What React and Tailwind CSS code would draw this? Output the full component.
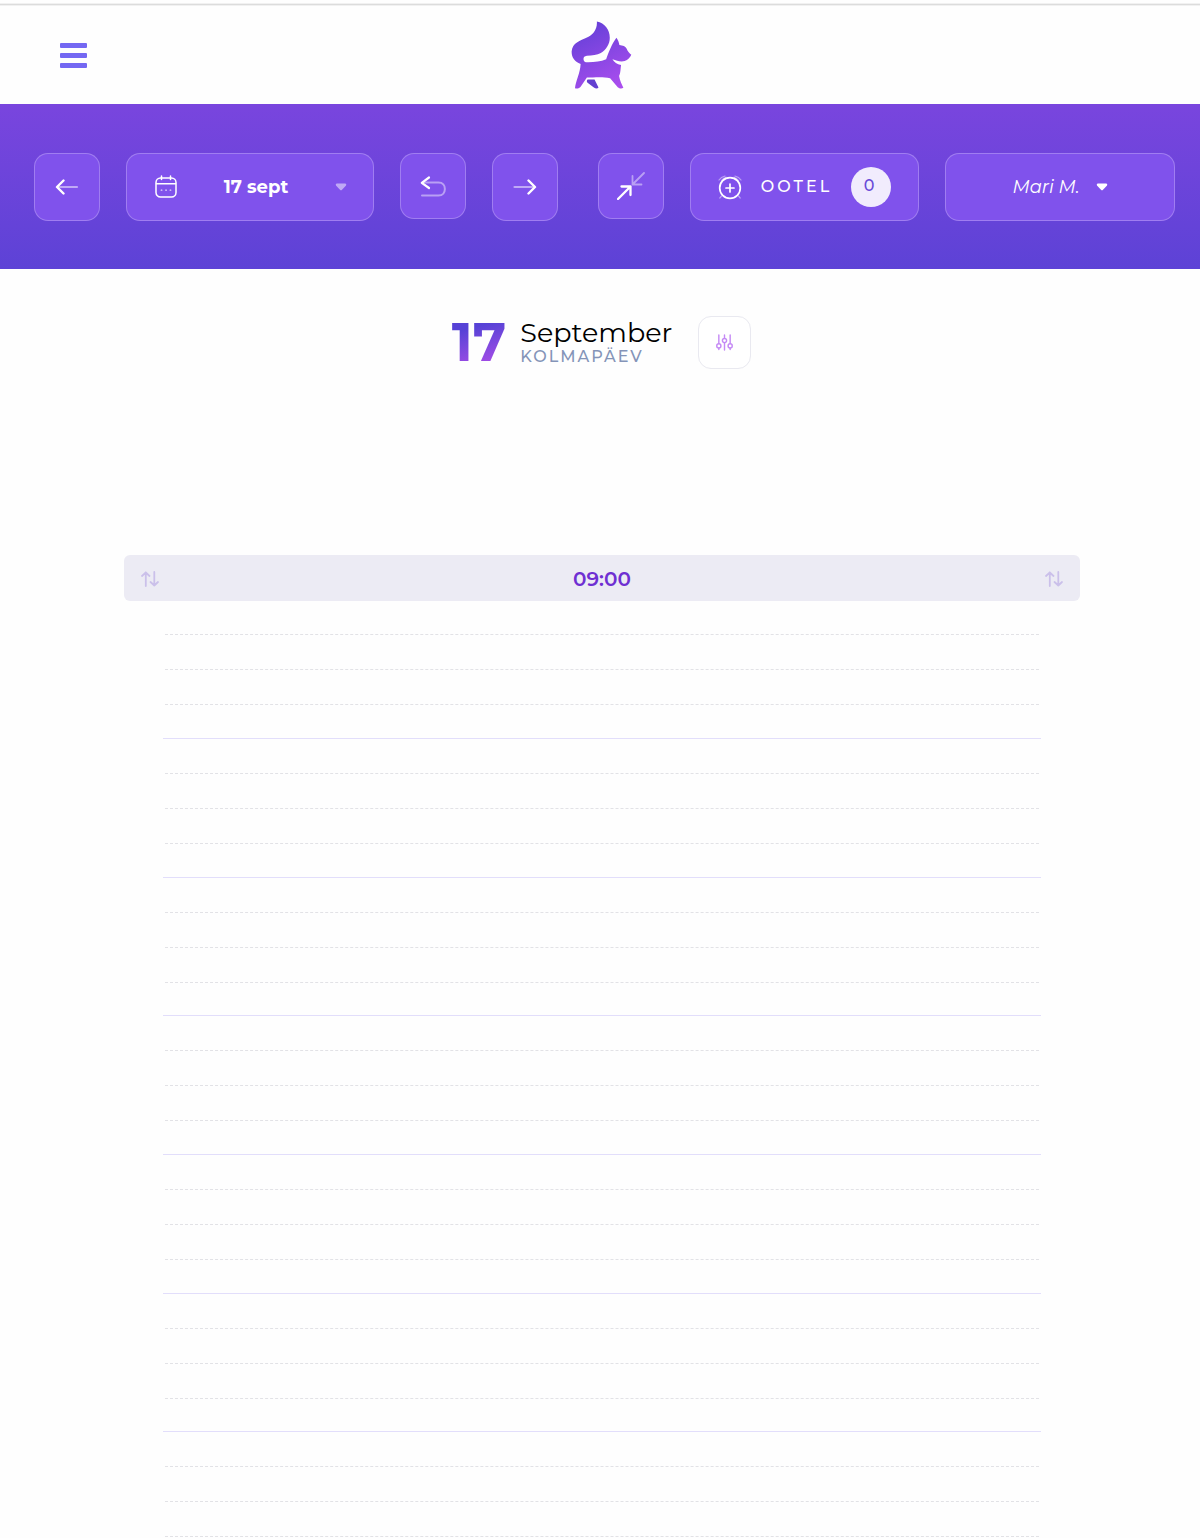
import { useState } from "react";

const HOURS = ["09:00", "10:00", "11:00", "12:00", "13:00", "14:00", "15:00"];
const STAFF = ["Mari M."];

function ToolButton({ label, className = "", children, ...props }) {
  return (
    <button
      type="button"
      aria-label={label}
      className={`flex w-[66px] shrink-0 items-center justify-center rounded-[14px] border border-white/25 bg-[#8052ec] ${className}`}
      {...props}
    >
      {children}
    </button>
  );
}

function Logo() {
  return (
    <svg viewBox="64 64 184 204" className="h-[68px] w-[61px]" aria-hidden="true">
      <defs>
        <linearGradient id="logo" x1="0.3" y1="0" x2="0.75" y2="1">
          <stop offset="0" stopColor="#6540d8" />
          <stop offset="1" stopColor="#ab4eee" />
        </linearGradient>
      </defs>
      <path
        fill="url(#logo)"
        d="M142 65C166 70 181 90 181 114C181 134 170 150 154 160C143 167 128 167 112 168C103 169 101 174 102 180C103 186 108 189 116 188C136 187 154 186 170 179C177 160 187 132 201 114C206 120 209 129 210 136C220 137 229 140 232 147C235 156 241 161 246 165C242 173 236 181 226 184C214 188 202 183 189 179C194 188 203 194 215 196C213 208 214 219 209 229C211 243 218 255 222 265C216 269 210 267 205 263L182 236C160 231 132 234 112 234L93 262C89 267 82 269 76 266C78 245 92 220 93 193C75 188 65 172 66 155C67 142 73 133 82 128C102 115 121 113 133 97C140 87 143 76 142 65Z"
      />
      <path
        fill="#6340d0"
        d="M114 240H135L147 264C144 269 138 268 133 264L114 250C111 247 111 243 114 240Z"
      />
    </svg>
  );
}

function Caret({ className = "" }) {
  return (
    <svg viewBox="0 0 12 8" className={`h-2 w-3 fill-white ${className}`} aria-hidden="true">
      <path d="M2 0.5H10Q12 1 10.8 2.8L7 6.7Q6 7.7 5 6.7L1.2 2.8Q0 1 2 0.5Z" />
    </svg>
  );
}

function SortIcon() {
  return (
    <svg
      viewBox="0 0 18 16"
      className="h-4 w-[18px] fill-none stroke-[#cbc0ea] stroke-[1.8]"
      strokeLinecap="round"
      strokeLinejoin="round"
      aria-hidden="true"
    >
      <path d="M4.8 15V1.5M1 5L4.8 1.5L8.5 5M13.3 1V14.5M9.5 11L13.3 14.5L17 11" />
    </svg>
  );
}

export default function App() {
  const [waiting] = useState(0);
  const [staff, setStaff] = useState(STAFF[0]);

  return (
    <div className="flex h-screen flex-col overflow-hidden bg-[#fefefe] pt-[3px] font-['Montserrat','Inter',sans-serif]">
      <div className="h-[3px] shrink-0 border-y border-[#f1f1f1] bg-[#dcdcdc]" />

      {/* Header */}
      <header className="grid h-[98px] shrink-0 grid-cols-3 items-center px-[60px]">
        <button type="button" aria-label="Menüü" className="flex w-[27px] flex-col gap-[5px]">
          <span className="h-[5px] rounded-[1px] bg-[#7468f2]" />
          <span className="h-[5px] rounded-[1px] bg-[#7468f2]" />
          <span className="h-[5px] rounded-[1px] bg-[#7468f2]" />
        </button>
        <a href="#" aria-label="Avaleht" className="ml-[3px] justify-self-center">
          <Logo />
        </a>
      </header>

      {/* Toolbar */}
      <nav className="flex h-[165px] shrink-0 items-start gap-[26px] bg-linear-to-b from-[#7945de] to-[#5d42d6] pt-[49px] pr-[25px] pl-[34px] text-white">
        <ToolButton label="Eelmine päev" className="h-[68px]">
          <svg viewBox="0 0 24 16" className="h-4 w-6 fill-none stroke-white" strokeLinecap="round" strokeLinejoin="round">
            <path d="M4 8H22" strokeWidth="2.2" opacity="0.5" />
            <path d="M8.5 1.5L2 8L8.5 14.5" strokeWidth="2.4" />
          </svg>
        </ToolButton>

        <button
          type="button"
          className="flex h-[68px] w-[248px] shrink-0 items-center justify-between rounded-[14px] border border-white/25 bg-[#8052ec] pr-[26px] pl-7"
        >
          <svg viewBox="0 0 22 24" className="h-6 w-[22px] fill-none stroke-white stroke-[1.5]" strokeLinecap="round" aria-hidden="true">
            <rect x="1" y="3" width="20" height="19" rx="4.5" />
            <path d="M1.5 8.8H20.5M6.5 1V4.5M15.5 1V4.5" />
            <path d="M6.5 15.2H6.6M11 15.2H11.1M15.4 15.2H15.5" strokeWidth="1.8" opacity="0.6" />
          </svg>
          <span className="text-lg font-bold">17 sept</span>
          <Caret className="opacity-50" />
        </button>

        <ToolButton label="Täna" className="h-[66px]">
          <svg viewBox="0 0 26 22" className="h-[22px] w-[26px] fill-none stroke-white" strokeLinecap="round" strokeLinejoin="round">
            <path d="M3 7.5H18.5C27 7.5 27 20.5 18.5 20.5H2" strokeWidth="2" opacity="0.45" />
            <path d="M9 2.5L1.8 7.8L9 13" strokeWidth="2.2" />
          </svg>
        </ToolButton>

        <ToolButton label="Järgmine päev" className="h-[68px]">
          <svg viewBox="0 0 24 16" className="h-4 w-6 fill-none stroke-white" strokeLinecap="round" strokeLinejoin="round">
            <path d="M1.5 8H20" strokeWidth="2.2" opacity="0.5" />
            <path d="M15.5 1.5L22 8L15.5 14.5" strokeWidth="2.4" />
          </svg>
        </ToolButton>

        <ToolButton label="Ahenda" className="ml-[14px] h-[66px]">
          <svg viewBox="0 0 28 28" className="size-7 fill-none stroke-white" strokeLinecap="round" strokeLinejoin="round">
            <path d="M1 27L13.5 14.5M4.5 14.5H13.5V23" strokeWidth="2.3" />
            <path d="M27 1L15.5 12.5M15.5 4V12.5H24.5" strokeWidth="1.8" opacity="0.45" />
          </svg>
        </ToolButton>

        <button
          type="button"
          className="flex h-[68px] w-[229px] shrink-0 items-center justify-between rounded-[14px] border border-white/25 bg-[#8052ec] px-[27px]"
        >
          <svg viewBox="0 0 24 26" className="h-[26px] w-6 fill-none stroke-white" strokeLinecap="round" aria-hidden="true">
            <circle cx="12" cy="14" r="10.3" strokeWidth="1.7" />
            <path d="M8 14H16M12 10V18" strokeWidth="1.7" />
            <path d="M1 6Q3 3 7 2M3.5 6.5Q5.5 4 8 3.2M17 2Q21 3 23 6M16 3.2Q18.5 4 20.5 6.5M3.5 22L1.8 24M20.5 22L22.2 24" strokeWidth="1.2" opacity="0.45" />
          </svg>
          <span className="text-base font-medium tracking-[3px]">OOTEL</span>
          <span className="flex size-10 items-center justify-center rounded-full bg-[#f1ecfd] pr-1 pb-0.5 text-base font-medium text-[#6a4bd8]">
            {waiting}
          </span>
        </button>

        <label className="flex h-[68px] min-w-0 flex-1 items-center justify-center gap-4 rounded-[14px] border border-white/25 bg-[#8052ec]">
          <select
            aria-label="Töötaja"
            value={staff}
            onChange={(e) => setStaff(e.target.value)}
            className="appearance-none bg-transparent text-lg italic [field-sizing:content]"
          >
            {STAFF.map((name) => (
              <option key={name}>{name}</option>
            ))}
          </select>
          <Caret />
        </label>
      </nav>

      {/* Date */}
      <div className="mt-[47px] flex shrink-0 items-center justify-center pl-[3px]">
        <span className="bg-linear-165 from-[#5642d6] from-25% to-[#a34be6] to-85% bg-clip-text text-[54px] leading-[53px] font-bold text-transparent">
          17
        </span>
        <h1 className="ml-[14px] flex flex-col pt-px">
          <span className="text-[27px] leading-7 text-black">September</span>
          <span className="text-base leading-5 font-medium tracking-[2px] text-[#8494b8]">KOLMAPÄEV</span>
        </h1>
        <button
          type="button"
          aria-label="Seaded"
          className="ml-[26px] flex size-[53px] items-center justify-center rounded-[13px] border border-[#e9e9f0] bg-white"
        >
          <svg viewBox="0 0 18 18" className="size-[17px] fill-none stroke-[#c58af5] stroke-[1.5]" strokeLinecap="round">
            <path d="M3 1V10M3 15V16.5M9 1V4.5M9 9.5V17M15 1V10M15 15V16.5" />
            <circle cx="3" cy="12.6" r="2.2" />
            <circle cx="9" cy="7" r="2.2" />
            <circle cx="15" cy="12.6" r="2.2" />
          </svg>
        </button>
      </div>

      {/* Calendar */}
      <main className="mt-[186px] mr-30 ml-31 min-h-0 flex-1 overflow-hidden">
        <div className="flex h-[46px] items-center justify-between rounded-md bg-[#ecebf4] px-[17px] pt-px">
          <button type="button" aria-label="Sorteeri vasakult">
            <SortIcon />
          </button>
          <h2 className="text-xl font-semibold text-[#6f2fd2]">{HOURS[0]}</h2>
          <button type="button" aria-label="Sorteeri paremalt">
            <SortIcon />
          </button>
        </div>
        <div className="-mt-px px-[39px]">
          {HOURS.map((hour) => (
            <section
              key={hour}
              className="grid h-[139px] auto-rows-[35px] border-b border-[#e2defb] nth-[3n]:h-[138px]"
            >
              <div className="mx-0.5 border-b border-dashed border-[#e2e2e6]" />
              <div className="mx-0.5 border-b border-dashed border-[#e2e2e6]" />
              <div className="mx-0.5 border-b border-dashed border-[#e2e2e6]" />
            </section>
          ))}
        </div>
      </main>
    </div>
  );
}
